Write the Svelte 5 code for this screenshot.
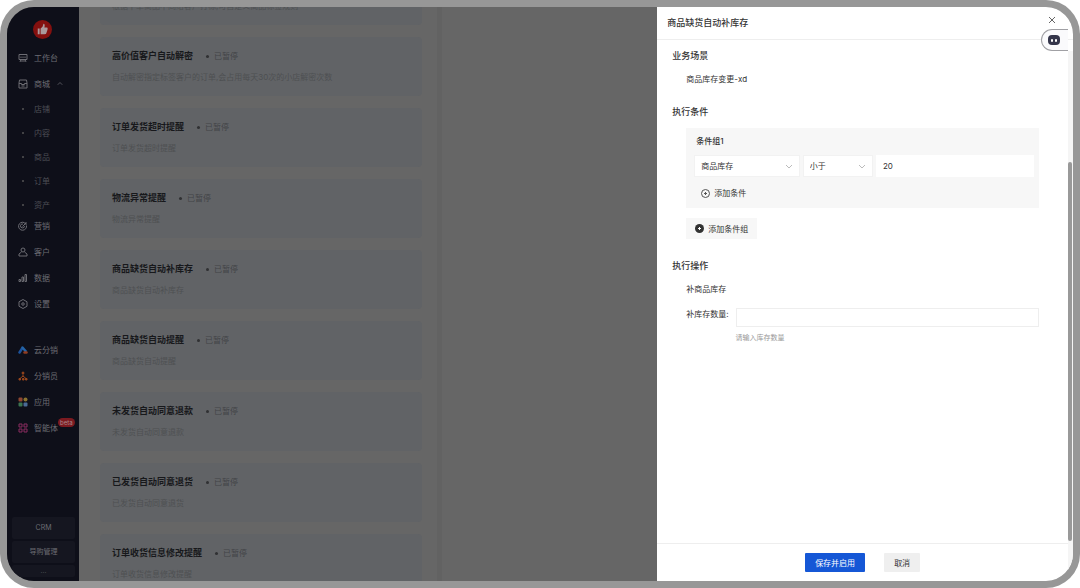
<script lang="ts">
	type Item = { icon: string; label: string; beta?: boolean };
	type Flow = { title?: string; desc: string };

	const shopLinks = ['店铺', '内容', '商品', '订单', '资产'];

	const mainItems: Item[] = [
		{ icon: 'target', label: '营销' },
		{ icon: 'user', label: '客户' },
		{ icon: 'chart', label: '数据' },
		{ icon: 'gear', label: '设置' },
	];

	const appItems: Item[] = [
		{ icon: 'cloud', label: '云分销' },
		{ icon: 'tree', label: '分销员' },
		{ icon: 'apps', label: '应用' },
		{ icon: 'agent', label: '智能体', beta: true },
	];

	const flows: Flow[] = [
		{ desc: '根据下单商品不同给客户打标,可自定义商品标签规则' },
		{ title: '高价值客户自动解密', desc: '自动解密指定标签客户的订单,会占用每天30次的小店解密次数' },
		{ title: '订单发货超时提醒', desc: '订单发货超时提醒' },
		{ title: '物流异常提醒', desc: '物流异常提醒' },
		{ title: '商品缺货自动补库存', desc: '商品缺货自动补库存' },
		{ title: '商品缺货自动提醒', desc: '商品缺货自动提醒' },
		{ title: '未发货自动同意退款', desc: '未发货自动同意退款' },
		{ title: '已发货自动同意退货', desc: '已发货自动同意退货' },
		{ title: '订单收货信息修改提醒', desc: '订单收货信息修改提醒' },
	];

	let field = $state('商品库存');
	let operator = $state('小于');
	let threshold = $state('20');
	let amount = $state('');
</script>

{#snippet icon(name: string)}
	<svg class="icon" viewBox="0 0 20 20" fill="none" stroke="currentColor" stroke-width="2">
		{#if name === 'desk'}
			<path d="M2 3h16v10H2zM6 7v3M10 7v3M14 7v3M6 13l-2 5M14 13l2 5M6 16h8" />
		{:else if name === 'shop'}
			<path d="M3 2h14l1 6v10H2V8zM2 9h5v2h6V9h5M7 14h6" />
		{:else if name === 'target'}
			<path d="M17 9a8 8 0 1 1-5-6M13 10a4 4 0 1 1-3-4M9 11l8-8M14 2v4h4" />
		{:else if name === 'user'}
			<circle cx="10" cy="6" r="4" />
			<path d="M7 10l-5 4v4h16v-4l-5-4" />
		{:else if name === 'chart'}
			<path d="M2 13h3v4H2zM8 8h3v9H8zM14 3h3v14h-3z" />
		{:else if name === 'gear'}
			<path d="M10 1l8 4.500v9L10 19l-8-4.500v-9z" />
			<circle cx="10" cy="10" r="2.500" />
		{:else if name === 'cloud'}
			<path d="M3 15l5-8" stroke="#1c529c" stroke-width="5" stroke-linecap="round" />
			<path d="M9 5l6 7" stroke="#2464a8" stroke-width="5" stroke-linecap="round" />
			<path d="M13 15h4" stroke="#913d22" stroke-width="5" stroke-linecap="round" />
		{:else if name === 'tree'}
			<g stroke="#98461c">
				<path d="M10 7v5M4 15l6-5 6 5" />
				<circle cx="10" cy="4" r="2" fill="#98461c" />
				<path d="M2 15h3v3H2zM9 15h3v3H9zM15 15h3v3h-3z" fill="#98461c" />
			</g>
		{:else if name === 'apps'}
			<g stroke="none">
				<rect x="1" y="1" width="8" height="8" rx="2" fill="#8e4630" />
				<circle cx="15" cy="5" r="4" fill="#8a7430" />
				<rect x="1" y="11" width="8" height="8" rx="2" fill="#3b7450" />
				<rect x="11" y="11" width="8" height="8" rx="2" fill="#4a6b96" />
			</g>
		{:else}
			<g stroke="#8a2c60">
				<path d="M2 2h6v6H2zM12 2h6v6h-6zM2 12h6v6H2zM12 12h6v6h-6z" />
			</g>
		{/if}
	</svg>
{/snippet}

{#snippet navItem(item: Item)}
	<a class="nav-item" href="#{item.icon}">
		{@render icon(item.icon)}
		<span>{item.label}</span>
		{#if item.beta}
			<span class="beta">beta</span>
		{/if}
	</a>
{/snippet}

<div class="frame">
	<div class="app">
		<nav class="sidebar">
			<svg class="logo" viewBox="0 0 20 20">
				<circle cx="10" cy="10" r="10" fill="#84100f" />
				<path d="M5 9h2v6H5zM8 9l2-2 1-3q2 0 1 4h3q1 1 0 3l-1 3q0 1-2 1H8z" fill="#aa999c" />
			</svg>

			{@render navItem({ icon: 'desk', label: '工作台' })}
			<a class="nav-item" href="#shop">
				{@render icon('shop')}
				<span>商城</span>
				<svg class="caret" viewBox="0 0 8 8" fill="none" stroke="currentColor">
					<path d="M1 5l3-3 3 3" />
				</svg>
			</a>
			<div class="sub">
				{#each shopLinks as link}
					<a class="sub-item" href="#{link}"><i></i>{link}</a>
				{/each}
			</div>
			{#each mainItems as item}
				{@render navItem(item)}
			{/each}

			<div class="apps">
				{#each appItems as item}
					{@render navItem(item)}
				{/each}
			</div>

			<div class="shortcuts">
				<button type="button">CRM</button>
				<button type="button">导购管理</button>
				<button type="button" class="more">...</button>
			</div>
		</nav>

		<main class="content">
			<div class="flows">
				{#each flows as flow}
					<article class="flow">
						{#if flow.title}
							<div class="flow-head">
								<h3>{flow.title}</h3>
								<span class="status">已暂停</span>
							</div>
						{/if}
						<p>{flow.desc}</p>
					</article>
				{/each}
			</div>
			<div class="canvas"></div>
		</main>

		<aside class="drawer">
			<header>
				<h1>商品缺货自动补库存</h1>
				<button type="button" class="close" aria-label="关闭">
					<svg viewBox="0 0 8 8" fill="none" stroke="#666"><path d="M1 1l6 6M7 1L1 7" /></svg>
				</button>
			</header>

			<button type="button" class="assistant" aria-label="助手">
				<svg viewBox="0 0 12 12">
					<rect x="0" y="1" width="12" height="10" rx="4" fill="#34354a" />
					<rect x="3" y="5" width="2" height="3" rx="1" fill="#fff" />
					<rect x="7" y="5" width="2" height="3" rx="1" fill="#fff" />
				</svg>
			</button>

			<div class="body">
				<div class="form">
					<section>
						<h2>业务场景</h2>
						<p class="line">商品库存变更-xd</p>
					</section>

					<section>
						<h2>执行条件</h2>
						<div class="group">
							<h4>条件组1</h4>
							<div class="condition">
								<span class="select">
									<select bind:value={field} aria-label="条件字段">
										<option>商品库存</option>
									</select>
									<svg viewBox="0 0 8 8" fill="none" stroke="#bbb"><path d="M1 3l3 3 3-3" /></svg>
								</span>
								<span class="select">
									<select bind:value={operator} aria-label="比较方式">
										<option>小于</option>
										<option>大于</option>
									</select>
									<svg viewBox="0 0 8 8" fill="none" stroke="#bbb"><path d="M1 3l3 3 3-3" /></svg>
								</span>
								<input type="text" bind:value={threshold} aria-label="条件值" />
							</div>
							<button type="button" class="add">
								<svg viewBox="0 0 18 18" fill="none" stroke="#555" stroke-width="2">
									<circle cx="9" cy="9" r="8" />
									<path d="M9 6v6M6 9h6" />
								</svg>
								添加条件
							</button>
						</div>
						<button type="button" class="add add-group">
							<svg viewBox="0 0 18 18" stroke="#fff" stroke-width="2">
								<circle cx="9" cy="9" r="9" fill="#333" stroke="none" />
								<path d="M9 6v6M6 9h6" />
							</svg>
							添加条件组
						</button>
					</section>

					<section>
						<h2>执行操作</h2>
						<p class="line">补商品库存</p>
						<div class="amount">
							<label for="amount">补库存数量:</label>
							<div class="amount-field">
								<input id="amount" type="text" bind:value={amount} />
								<small>请输入库存数量</small>
							</div>
						</div>
					</section>
				</div>
			</div>

			<footer>
				<button type="button" class="primary">保存并启用</button>
				<button type="button">取消</button>
			</footer>
			<div class="scrollbar"></div>
		</aside>
	</div>
</div>

<style>
	:global(body) {
		background: #fff;
	}

	.frame,
	.frame * {
		box-sizing: border-box;
	}

	.frame {
		height: 100vh;
		padding: 7px;
		background: #979797;
		border-radius: 34px;
		font-family: Inter, 'Noto Sans CJK SC', sans-serif;
		font-size: 8px;
		line-height: 12px;
		color: #333;
	}

	h1,
	h2,
	h3,
	h4,
	p {
		margin: 0;
		font-weight: 500;
	}

	h1,
	h2,
	h3 {
		font-size: 9px;
		line-height: 14px;
	}

	a {
		color: inherit;
		text-decoration: none;
	}

	button,
	input,
	select {
		margin: 0;
		padding: 0;
		border: 0;
		background: none;
		font: inherit;
		color: inherit;
		outline: none;
	}

	button {
		cursor: pointer;
	}

	.app {
		position: relative;
		display: flex;
		height: 100%;
		overflow: hidden;
		border-radius: 27px;
		background: #666;
	}

	.sidebar {
		display: flex;
		flex-direction: column;
		flex: none;
		width: 72px;
		background: #0e0f19;
		color: #6c6c73;
	}

	.logo {
		flex: none;
		width: 19px;
		height: 19px;
		margin: 13px 0 6px 26px;
	}

	.nav-item {
		position: relative;
		display: flex;
		align-items: center;
		flex: none;
		height: 26px;
		padding-left: 11px;
	}

	.icon {
		width: 10px;
		height: 10px;
		margin-right: 6px;
	}

	.caret {
		width: 6px;
		height: 6px;
		margin-left: 7px;
	}

	.sub {
		margin-bottom: -4px;
		color: #4d4e55;
	}

	.sub-item {
		display: flex;
		align-items: center;
		height: 24px;
		padding-left: 15px;
	}

	.sub-item i {
		width: 2px;
		height: 2px;
		margin-right: 10px;
		border-radius: 50%;
		background: #555;
	}

	.apps {
		margin-top: 20px;
	}

	.beta {
		position: absolute;
		top: 3px;
		left: 51px;
		padding: 0 2px;
		border-radius: 5px;
		background: #7c1a20;
		color: #a9898c;
		font-size: 6px;
		line-height: 9px;
	}

	.shortcuts {
		display: flex;
		flex-direction: column;
		gap: 2px;
		margin: auto 4px 4px 5px;
	}

	.shortcuts button {
		height: 22px;
		border-radius: 2px;
		background: #151620;
		font-size: 7px;
	}

	.shortcuts .more {
		height: 12px;
		line-height: 8px;
		color: #4d4e55;
	}

	.content {
		display: flex;
		flex: 1;
		min-width: 0;
	}

	.flows {
		display: flex;
		flex-direction: column;
		gap: 12px;
		flex: none;
		width: 36%;
		margin-top: -19px;
		padding: 0 15px 0 21px;
	}

	.flow {
		flex: none;
		padding: 12px 12px 13px;
		border-radius: 4px;
		background: #616366;
	}

	.flow-head {
		display: flex;
		align-items: center;
		gap: 13px;
		margin-bottom: 8px;
	}

	.flow h3 {
		color: #17181b;
		font-weight: 600;
	}

	.status {
		display: flex;
		align-items: center;
		gap: 5px;
		color: #424447;
	}

	.status::before {
		content: '';
		width: 3px;
		height: 3px;
		border-radius: 50%;
		background: #303133;
	}

	.flow p {
		font-weight: 400;
		color: #4e5052;
	}

	.canvas {
		flex: 1;
		border-left: 5px solid #626262;
	}

	.drawer {
		position: absolute;
		top: 0;
		right: 0;
		bottom: 0;
		display: flex;
		flex-direction: column;
		width: 39%;
		background: #fff;
	}

	.drawer header {
		display: flex;
		align-items: center;
		justify-content: space-between;
		flex: none;
		height: 33px;
		padding: 0 17px 0 10px;
		border-bottom: 1px solid #eee;
	}

	.close {
		display: flex;
		padding-bottom: 6px;
	}

	.close svg {
		width: 8px;
		height: 8px;
	}

	.assistant {
		position: absolute;
		top: 22px;
		right: 5px;
		width: 27px;
		height: 22px;
		border: 1px solid #a0a0a4;
		border-right: 0;
		border-radius: 11px 0 0 11px;
		background: #fafafc;
	}

	.assistant svg {
		display: block;
		width: 12px;
		height: 12px;
		margin-left: 6px;
	}

	.body {
		flex: 1;
		min-height: 0;
	}

	.form {
		padding: 9px 34px 0 15px;
	}

	section {
		padding-bottom: 20px;
	}

	.line {
		margin: 10px 0 0 14px;
		font-weight: 400;
	}

	.group {
		margin: 9px 0 10px 14px;
		padding: 7px 5px 9px 8px;
		background: #f7f7f7;
	}

	.group h4 {
		margin: 0 0 8px 2px;
		font-size: 8px;
	}

	.condition {
		display: grid;
		grid-template-columns: 6fr 4fr 9fr;
		gap: 3px;
		height: 22px;
	}

	.select {
		position: relative;
		border: 1px solid #f2f2f2;
		background: #fff;
	}

	.select select {
		appearance: none;
		width: 100%;
		height: 100%;
		padding-left: 6px;
	}

	.select svg {
		position: absolute;
		top: 6px;
		right: 6px;
		width: 8px;
		height: 8px;
		pointer-events: none;
	}

	.condition input {
		min-width: 0;
		padding-left: 7px;
		background: #fff;
	}

	.add {
		display: flex;
		align-items: center;
		gap: 4px;
		height: 12px;
		margin: 10px 0 0 7px;
	}

	.add svg {
		width: 9px;
		height: 9px;
	}

	.add-group {
		height: 21px;
		margin: 0 0 0 14px;
		padding: 0 9px;
		background: #f7f7f7;
	}

	.amount {
		display: flex;
		gap: 7px;
		margin: 13px 0 0 14px;
	}

	.amount-field {
		display: flex;
		flex-direction: column;
		flex: 1;
		gap: 5px;
	}

	.amount-field input {
		height: 19px;
		padding: 0 6px;
		border: 1px solid #eee;
	}

	.amount small {
		font-size: 7px;
		color: #999;
	}

	.drawer footer {
		display: flex;
		justify-content: center;
		gap: 19px;
		flex: none;
		height: 38px;
		padding: 9px 5px 0 0;
		border-top: 1px solid #eee;
	}

	.drawer footer button {
		height: 19px;
		padding: 0 10px;
		border-radius: 1px;
		background: #efefef;
	}

	.drawer footer .primary {
		background: #1557d6;
		color: #fff;
	}

	.scrollbar {
		position: absolute;
		top: 44px;
		right: 0;
		bottom: 0;
		width: 5px;
		background: #f5f5f5;
	}

	.scrollbar::before {
		content: '';
		position: absolute;
		top: 21%;
		right: 1px;
		bottom: 40px;
		width: 4px;
		border-radius: 2px;
		background: #999;
	}
</style>
